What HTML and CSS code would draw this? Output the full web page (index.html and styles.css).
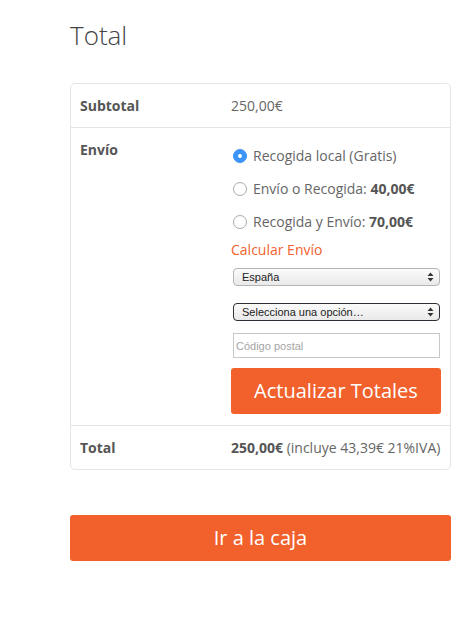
FILE: index.html
```html
<!DOCTYPE html>
<html lang="es">
<head>
<meta charset="utf-8">
<title>Total</title>
<link rel="stylesheet" href="styles.css">
</head>
<body>
<div class="page">
  <h2 class="title">Total</h2>
  <div class="totals">
    <div class="row">
      <div class="label">Subtotal</div>
      <div class="value">250,00€</div>
    </div>
    <div class="row">
      <div class="label">Envío</div>
      <div class="value">
        <ul class="methods">
          <li><span class="radio checked"></span><span>Recogida local (Gratis)</span></li>
          <li><span class="radio"></span><span>Envío o Recogida: <b>40,00€</b></span></li>
          <li><span class="radio"></span><span>Recogida y Envío: <b>70,00€</b></span></li>
        </ul>
        <div class="calc">Calcular Envío</div>
        <div class="select">
          <span>España</span>
          <svg class="arrows" width="7" height="10" viewBox="0 0 7 10"><path d="M3.5 0.5 L6.5 4 L0.5 4 Z M3.5 9.5 L6.5 6 L0.5 6 Z" fill="#333"/></svg>
        </div>
        <div class="select focused">
          <span>Selecciona una opción…</span>
          <svg class="arrows" width="7" height="10" viewBox="0 0 7 10"><path d="M3.5 0.5 L6.5 4 L0.5 4 Z M3.5 9.5 L6.5 6 L0.5 6 Z" fill="#333"/></svg>
        </div>
        <input class="postal" type="text" placeholder="Código postal">
        <button class="btn update">Actualizar Totales</button>
      </div>
    </div>
    <div class="row last">
      <div class="label">Total</div>
      <div class="value"><b>250,00€</b> (incluye 43,39€ 21%IVA)</div>
    </div>
  </div>
  <button class="btn checkout">Ir a la caja</button>
</div>
</body>
</html>
```
FILE: styles.css
```css
* { box-sizing: border-box; }
html, body { margin: 0; padding: 0; background: #fff; }
body {
  font-family: "Open Sans", "Noto Sans", sans-serif;
  color: #666;
  font-size: 14px;
  line-height: 20px;
}
.page {
  padding: 17px 24px 40px 70px;
}
.title {
  margin: 0 0 30px 0;
  font-size: 26px;
  line-height: 36px;
  font-weight: 300;
  color: #444;
}
.totals {
  border: 1px solid #e6e6e6;
  border-radius: 5px;
}
.row {
  display: grid;
  grid-template-columns: 151px 1fr;
  padding: 12px 9px 11px 9px;
  border-bottom: 1px solid #e6e6e6;
}
.row.last { border-bottom: 0; }
.label {
  font-weight: 700;
  color: #555;
}
.value b { font-weight: 700; color: #555; }
.methods {
  list-style: none;
  margin: 6px 0 0 0;
  padding: 0;
}
.methods li {
  display: flex;
  align-items: center;
  height: 20px;
  margin-bottom: 13px;
}
.methods li:last-child { margin-bottom: 8px; }
.radio {
  width: 14px;
  height: 14px;
  border-radius: 50%;
  border: 1px solid #a9a9a9;
  background: #fff;
  margin: 0 6px 0 2px;
  flex: none;
  position: relative;
}
.radio.checked {
  border-color: #3a8ff5;
  background: #3b95f8;
}
.radio.checked::after {
  content: "";
  position: absolute;
  left: 4px;
  top: 4px;
  width: 4px;
  height: 4px;
  border-radius: 50%;
  background: #fff;
}
.calc {
  color: #f26230;
  margin-bottom: 8px;
}
.select {
  position: relative;
  width: 207px;
  height: 18px;
  margin-left: 2px;
  border: 1px solid #b5b5b5;
  border-radius: 4px;
  background: linear-gradient(#fbfbfb, #e9e9e9);
  font-family: "Liberation Sans", Arial, sans-serif;
  font-size: 11px;
  line-height: 16px;
  color: #222;
  padding-left: 8px;
  margin-bottom: 17px;
}
.select.focused {
  border-color: #2b2f36;
  margin-bottom: 12px;
}
.arrows {
  position: absolute;
  right: 5px;
  top: 3px;
}
.postal {
  display: block;
  width: 207px;
  height: 25px;
  margin: 0 0 10px 2px;
  border: 1px solid #c8c8c8;
  padding: 0 2px;
  font-family: "Liberation Sans", Arial, sans-serif;
  font-size: 11px;
  color: #333;
  background: #fff;
  outline: none;
}
.postal::placeholder { color: #a5a5a5; }
.btn {
  display: block;
  border: 0;
  border-radius: 3px;
  background: #f2612c;
  color: #fff;
  font-family: "Open Sans", "Noto Sans", sans-serif;
  font-size: 20px;
  line-height: 46px;
  height: 46px;
  text-align: center;
  padding: 0;
  cursor: pointer;
}
.update {
  width: 210px;
}
.checkout {
  width: 381px;
  margin-top: 45px;
}
```
